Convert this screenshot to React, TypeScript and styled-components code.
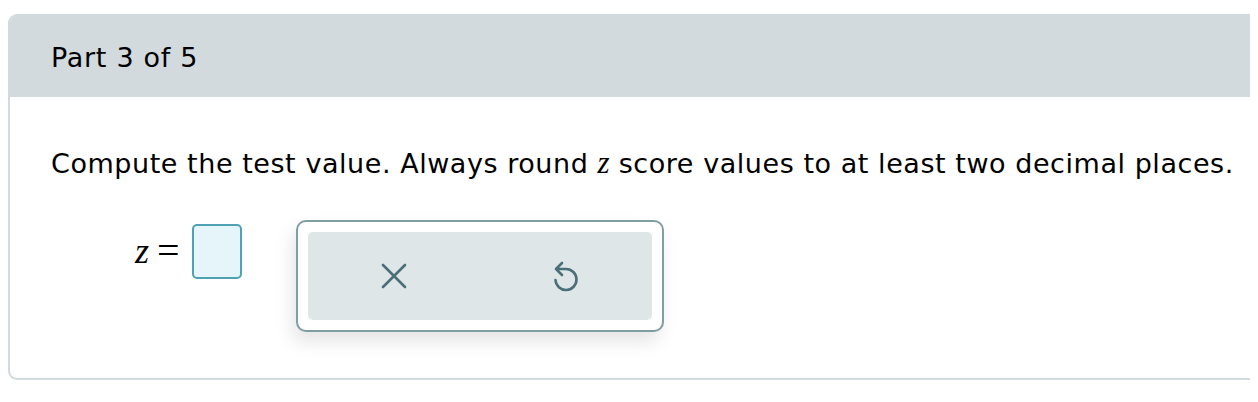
import React from "react";
import styled, { createGlobalStyle } from "styled-components";

const GlobalStyle = createGlobalStyle`
  body {
    margin: 8px;
    background: #ffffff;
    overflow: hidden;
    font-family: "DejaVu Sans", Verdana, sans-serif;
    color: #000000;
  }
`;

const Card = styled.div`
  margin-top: 6px;
  width: 1280px;
  border: 2px solid #d3dadd;
  border-top: none;
  border-radius: 9px;
  overflow: hidden;
`;

const Header = styled.div`
  background: #d2dadd;
  height: 83px;
  display: flex;
  align-items: center;
  margin-left: -2px;
  padding: 4px 0 0 43px;
  box-sizing: border-box;
  font-size: 27px;
  letter-spacing: 0.7px;
`;

const Body = styled.div`
  padding: 48px 0 46px 41px;
`;

const Prompt = styled.div`
  font-size: 27px;
  line-height: 36px;
  letter-spacing: 0.55px;
`;

const MathVar = styled.span<{ $size?: number }>`
  font-family: "Liberation Serif", "Times New Roman", serif;
  font-style: italic;
  font-size: ${(p) => p.$size ?? 31}px;
  letter-spacing: 0;
`;

const AnswerRow = styled.div`
  display: flex;
  align-items: flex-start;
  margin-top: 38px;
`;

const Equation = styled.div`
  display: flex;
  align-items: center;
  gap: 6px;
  margin-left: 84px;
  height: 58px;
  margin-top: 2px;
`;

const Equals = styled.span`
  font-family: "Liberation Serif", "Times New Roman", serif;
  font-size: 40px;
  line-height: 1;
  margin-left: 2px;
  margin-right: 6px;
`;

const AnswerBox = styled.div`
  width: 46px;
  height: 51px;
  border: 2px solid #4fa2b3;
  border-radius: 5px;
  background: #e6f5f9;
`;

const ToolPanel = styled.div`
  margin-left: 54px;
  padding: 10px;
  border: 2px solid #7f9ea4;
  border-radius: 10px;
  background: #ffffff;
  box-shadow: -4px 10px 18px rgba(0, 0, 0, 0.1);
`;

const ToolTray = styled.div`
  width: 344px;
  height: 88px;
  background: #dfe6e8;
  border-radius: 5px;
  display: grid;
  grid-template-columns: 1fr 1fr;
`;

const ToolButton = styled.button`
  border: none;
  background: transparent;
  display: flex;
  align-items: center;
  justify-content: center;
  padding: 0;
  cursor: pointer;
  color: #4a6f79;
`;

const ClearIcon = () => (
  <svg width="26" height="26" viewBox="0 0 26 26" fill="none">
    <path
      d="M2 2 L24 24 M24 2 L2 24"
      stroke="currentColor"
      strokeWidth="2.6"
      strokeLinecap="round"
    />
  </svg>
);

const UndoIcon = () => (
  <svg width="26" height="34" viewBox="0 0 26 34" fill="none">
    <path
      d="M9 4 L3 10 L9 16 M3 10 H13 A10.5 10.5 0 1 1 2.5 21"
      stroke="currentColor"
      strokeWidth="2.6"
      strokeLinecap="round"
      strokeLinejoin="round"
    />
  </svg>
);

export default function App() {
  return (
    <>
      <GlobalStyle />
      <Card>
        <Header>Part 3 of 5</Header>
        <Body>
          <Prompt>
            Compute the test value. Always round <MathVar>z</MathVar> score
            values to at least two decimal places.
          </Prompt>
          <AnswerRow>
            <Equation>
              <MathVar $size={36}>z</MathVar>
              <Equals>=</Equals>
              <AnswerBox />
            </Equation>
            <ToolPanel>
              <ToolTray>
                <ToolButton aria-label="Clear">
                  <ClearIcon />
                </ToolButton>
                <ToolButton aria-label="Undo">
                  <UndoIcon />
                </ToolButton>
              </ToolTray>
            </ToolPanel>
          </AnswerRow>
        </Body>
      </Card>
    </>
  );
}
